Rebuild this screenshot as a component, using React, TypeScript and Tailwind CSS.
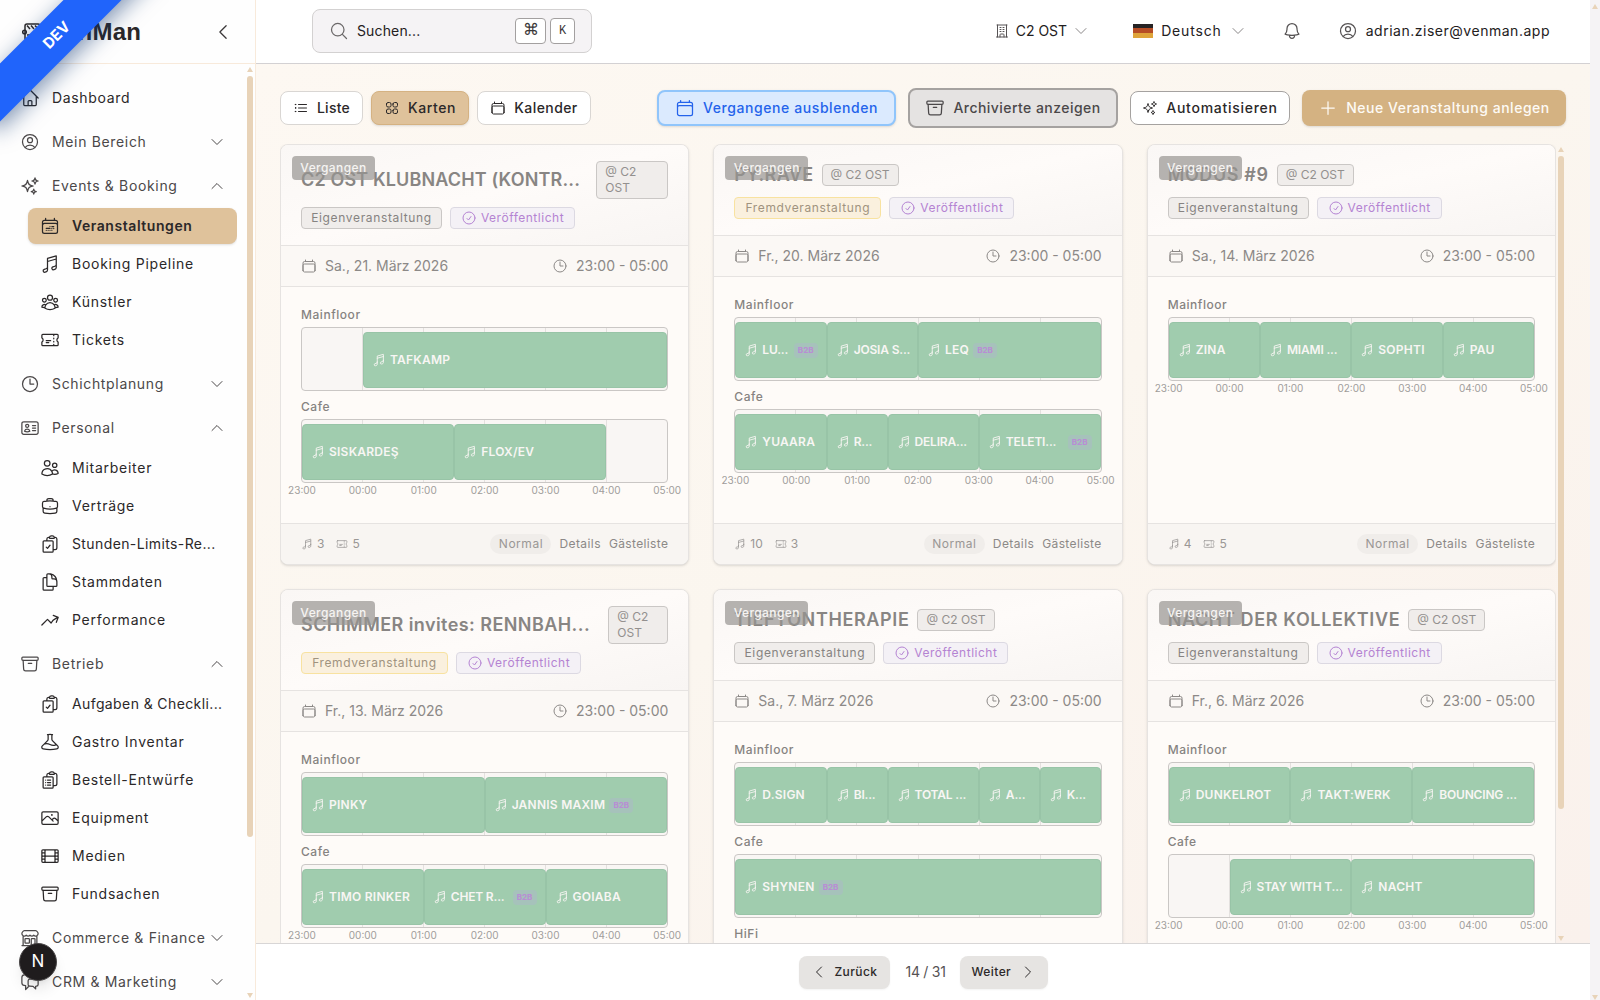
import type { ReactNode } from "react"
import type { IconType } from "react-icons"
import {
  HiOutlineArchiveBox,
  HiOutlineArrowTrendingUp,
  HiOutlineBeaker,
  HiOutlineBell,
  HiOutlineBriefcase,
  HiOutlineBuildingOffice,
  HiOutlineBuildingStorefront,
  HiOutlineCalendar,
  HiOutlineCalendarDateRange,
  HiOutlineChatBubbleLeftRight,
  HiOutlineCheckCircle,
  HiOutlineChevronDown,
  HiOutlineChevronLeft,
  HiOutlineChevronRight,
  HiOutlineChevronUp,
  HiOutlineClipboardDocumentCheck,
  HiOutlineClipboardDocumentList,
  HiOutlineClock,
  HiOutlineDocumentDuplicate,
  HiOutlineFilm,
  HiOutlineHome,
  HiOutlineIdentification,
  HiOutlineListBullet,
  HiOutlineMagnifyingGlass,
  HiOutlineMusicalNote,
  HiOutlinePhoto,
  HiOutlinePlus,
  HiOutlineSparkles,
  HiOutlineSquares2X2,
  HiOutlineTicket,
  HiOutlineUserCircle,
  HiOutlineUserGroup,
  HiOutlineUsers,
} from "react-icons/hi2"
import { clsx } from "clsx"

interface NavItem {
  label: string
  icon: IconType
  active?: boolean
}

interface NavSection {
  label: string
  icon: IconType
  open?: boolean
  plain?: boolean
  items?: NavItem[]
}

interface Slot {
  hours: number
  name?: string
  b2b?: boolean
  cut?: boolean
}

interface Floor {
  name: string
  slots: Slot[]
}

interface EventCard {
  title: string
  titleClass?: string
  venueClass?: string
  external?: boolean
  date: string
  floors: Floor[]
  artists: number
  tickets: number
}

const sections: NavSection[] = [
  { label: "Dashboard", icon: HiOutlineHome, plain: true },
  { label: "Mein Bereich", icon: HiOutlineUserCircle },
  {
    label: "Events & Booking",
    icon: HiOutlineSparkles,
    open: true,
    items: [
      { label: "Veranstaltungen", icon: HiOutlineCalendarDateRange, active: true },
      { label: "Booking Pipeline", icon: HiOutlineMusicalNote },
      { label: "Künstler", icon: HiOutlineUserGroup },
      { label: "Tickets", icon: HiOutlineTicket },
    ],
  },
  { label: "Schichtplanung", icon: HiOutlineClock },
  {
    label: "Personal",
    icon: HiOutlineIdentification,
    open: true,
    items: [
      { label: "Mitarbeiter", icon: HiOutlineUsers },
      { label: "Verträge", icon: HiOutlineBriefcase },
      { label: "Stunden-Limits-Re...", icon: HiOutlineClipboardDocumentCheck },
      { label: "Stammdaten", icon: HiOutlineDocumentDuplicate },
      { label: "Performance", icon: HiOutlineArrowTrendingUp },
    ],
  },
  {
    label: "Betrieb",
    icon: HiOutlineArchiveBox,
    open: true,
    items: [
      { label: "Aufgaben & Checkli...", icon: HiOutlineClipboardDocumentCheck },
      { label: "Gastro Inventar", icon: HiOutlineBeaker },
      { label: "Bestell-Entwürfe", icon: HiOutlineClipboardDocumentList },
      { label: "Equipment", icon: HiOutlinePhoto },
      { label: "Medien", icon: HiOutlineFilm },
      { label: "Fundsachen", icon: HiOutlineArchiveBox },
    ],
  },
  { label: "Commerce & Finance", icon: HiOutlineBuildingStorefront },
  { label: "CRM & Marketing", icon: HiOutlineChatBubbleLeftRight },
]

const events: EventCard[] = [
  {
    title: "C2 OST KLUBNACHT (KONTR...",
    titleClass: "tracking-[0.008em]",
    venueClass: "w-[72px]",
    date: "Sa., 21. März 2026",
    artists: 3,
    tickets: 5,
    floors: [
      { name: "Mainfloor", slots: [{ hours: 1 }, { hours: 5, name: "TAFKAMP" }] },
      {
        name: "Cafe",
        slots: [{ hours: 2.5, name: "SISKARDEŞ" }, { hours: 2.5, name: "FLOX/EV" }, { hours: 1 }],
      },
    ],
  },
  {
    title: "PY.RAVE",
    titleClass: "tracking-[0.02em]",
    external: true,
    date: "Fr., 20. März 2026",
    artists: 10,
    tickets: 3,
    floors: [
      {
        name: "Mainfloor",
        slots: [
          { hours: 1.5, name: "LU...", b2b: true, cut: true },
          { hours: 1.5, name: "JOSIA S...", cut: true },
          { hours: 3, name: "LEQ", b2b: true },
        ],
      },
      {
        name: "Cafe",
        slots: [
          { hours: 1.5, name: "YUAARA" },
          { hours: 1, name: "R...", cut: true },
          { hours: 1.5, name: "DELIRA...", cut: true },
          { hours: 2, name: "TELETI...", b2b: true, cut: true },
        ],
      },
    ],
  },
  {
    title: "MODUS #9",
    date: "Sa., 14. März 2026",
    artists: 4,
    tickets: 5,
    floors: [
      {
        name: "Mainfloor",
        slots: [
          { hours: 1.5, name: "ZINA" },
          { hours: 1.5, name: "MIAMI ...", cut: true },
          { hours: 1.5, name: "SOPHTI" },
          { hours: 1.5, name: "PAU" },
        ],
      },
    ],
  },
  {
    title: "SCHIMMER invites: RENNBAH...",
    titleClass: "tracking-[0.024em]",
    venueClass: "w-[60px]",
    external: true,
    date: "Fr., 13. März 2026",
    artists: 5,
    tickets: 4,
    floors: [
      {
        name: "Mainfloor",
        slots: [
          { hours: 3, name: "PINKY" },
          { hours: 3, name: "JANNIS MAXIM", b2b: true },
        ],
      },
      {
        name: "Cafe",
        slots: [
          { hours: 2, name: "TIMO RINKER" },
          { hours: 2, name: "CHET R...", b2b: true, cut: true },
          { hours: 2, name: "GOIABA" },
        ],
      },
    ],
  },
  {
    title: "TIEFTONTHERAPIE",
    date: "Sa., 7. März 2026",
    artists: 6,
    tickets: 3,
    floors: [
      {
        name: "Mainfloor",
        slots: [
          { hours: 1.5, name: "D.SIGN" },
          { hours: 1, name: "BI...", cut: true },
          { hours: 1.5, name: "TOTAL ...", cut: true },
          { hours: 1, name: "A...", cut: true },
          { hours: 1, name: "K...", cut: true },
        ],
      },
      { name: "Cafe", slots: [{ hours: 6, name: "SHYNEN", b2b: true }] },
      { name: "HiFi", slots: [{ hours: 6 }] },
    ],
  },
  {
    title: "NACHT DER KOLLEKTIVE",
    date: "Fr., 6. März 2026",
    artists: 5,
    tickets: 5,
    floors: [
      {
        name: "Mainfloor",
        slots: [
          { hours: 2, name: "DUNKELROT" },
          { hours: 2, name: "TAKT:WERK" },
          { hours: 2, name: "BOUNCING ...", cut: true },
        ],
      },
      {
        name: "Cafe",
        slots: [{ hours: 1 }, { hours: 2, name: "STAY WITH T...", cut: true }, { hours: 3, name: "NACHT" }],
      },
    ],
  },
]

const hours = ["23:00", "00:00", "01:00", "02:00", "03:00", "04:00", "05:00"]

function Scrollbar({ thumb }: { thumb: string }) {
  return (
    <div className="flex w-[6px] shrink-0 flex-col items-center">
      <svg width="6" height="5" viewBox="0 0 6 5" className="mb-1 shrink-0">
        <path d="M3 0 6 5H0Z" fill="#e8d3b8" />
      </svg>
      <div className={clsx("w-full rounded-full bg-[#e8d3b8]", thumb)} />
      <svg width="6" height="5" viewBox="0 0 6 5" className="mt-auto shrink-0">
        <path d="M3 5 0 0H6Z" fill="#e8d3b8" />
      </svg>
    </div>
  )
}

function Sidebar() {
  return (
    <aside className="flex w-64 shrink-0 flex-col border-r border-[#f8eadb] bg-[#fefefe]">
      <div className="flex h-16 shrink-0 items-center border-b border-[#f8eadb] pr-[22px] pl-[22px]">
        <svg width="20" height="20" viewBox="0 0 20 20" fill="none" stroke="#2b2829" strokeWidth="1.5">
          <rect x="3" y="2" width="15" height="16" rx="2" />
          <circle cx="2.5" cy="10" r="1.8" />
          <path d="M5 3.5 8 7M9 3.5l3 3.5M13 3.5l3 3.5M5 13h11" />
        </svg>
        <span className="ml-[7px] font-['Liberation_Sans'] text-2xl font-bold tracking-[0.01em] text-[#2b2829]">
          VenMan
        </span>
        <HiOutlineChevronLeft className="ml-auto size-5 text-[#3b3839]" />
      </div>
      <div className="flex min-h-0 flex-1">
        <nav className="flex w-[237px] flex-col gap-1 overflow-hidden pt-[14px] pl-2 text-sm">
          {sections.map((section) => (
            <div key={section.label} className="shrink-0">
              <div
                className={clsx(
                  "flex h-10 items-center px-3",
                  section.plain ? "text-[#2b2829]" : "text-[#4b4849]"
                )}
              >
                <section.icon className="size-5 shrink-0" />
                <span className="ml-3 whitespace-nowrap tracking-[0.047em]">{section.label}</span>
                {!section.plain &&
                  (section.open ? (
                    <HiOutlineChevronUp className="ml-auto size-4 shrink-0" />
                  ) : (
                    <HiOutlineChevronDown className="ml-auto size-4 shrink-0" />
                  ))}
              </div>
              {section.items && (
                <div className="ml-5 flex flex-col gap-0.5 py-0.5">
                  {section.items.map((item) => (
                    <div
                      key={item.label}
                      className={clsx(
                        "flex h-9 items-center rounded-lg px-3 text-[#2b2829]",
                        item.active && "bg-[#dfc29b] font-semibold shadow-sm"
                      )}
                    >
                      <item.icon className="size-5 shrink-0" />
                      <span
                        className={clsx(
                          "ml-3 whitespace-nowrap",
                          item.active && "tracking-[0.04em]",
                          !item.active && item.label.endsWith("...") && "tracking-[0.028em]",
                          !item.active && !item.label.endsWith("...") && "tracking-[0.053em]"
                        )}
                      >
                        {item.label}
                      </span>
                    </div>
                  ))}
                </div>
              )}
            </div>
          ))}
        </nav>
        <div className="ml-[10px] flex pt-[3px] pb-0.5">
          <Scrollbar thumb="h-[761px]" />
        </div>
      </div>
    </aside>
  )
}

function Kbd({ children, className }: { children: ReactNode; className: string }) {
  return (
    <kbd
      className={clsx(
        "flex h-[26px] items-center justify-center rounded border border-[#a3a0a0] bg-white font-['Liberation_Mono'] text-[#3b3839]",
        className
      )}
    >
      {children}
    </kbd>
  )
}

function TopBar() {
  return (
    <header className="flex h-16 shrink-0 items-center border-b border-[#d3d1d3] bg-white pr-10 pl-14 text-sm text-[#232021]">
      <div className="mb-0.5 flex h-11 w-[280px] items-center rounded-lg border border-[#d3d1d1] bg-[#f5f3f5] px-4">
        <HiOutlineMagnifyingGlass className="size-5 text-[#6b6869]" />
        <span className="ml-2 tracking-[0.01em]">Suchen...</span>
        <Kbd className="ml-auto w-[31px] text-base">⌘</Kbd>
        <Kbd className="ml-1 w-[25px] text-xs">K</Kbd>
      </div>
      <div className="mb-0.5 ml-auto flex items-center">
        <HiOutlineBuildingOffice className="size-4 text-[#565354]" />
        <span className="ml-1.5">C2 OST</span>
        <HiOutlineChevronDown className="ml-1.5 size-4 text-[#8a8788]" />
        <div className="ml-11 flex h-3.5 w-5 flex-col">
          <div className="flex-1 bg-[#262324]" />
          <div className="flex-1 bg-[#b64d25]" />
          <div className="flex-1 bg-[#dfa43a]" />
        </div>
        <span className="ml-2 tracking-[0.06em]">Deutsch</span>
        <HiOutlineChevronDown className="ml-2 size-4 text-[#8a8788]" />
        <HiOutlineBell className="ml-9 size-5 text-[#565354]" />
        <HiOutlineUserCircle className="ml-9 size-5 text-[#565354]" />
        <span className="ml-2 tracking-[0.037em]">adrian.ziser@venman.app</span>
      </div>
    </header>
  )
}

function Toolbar() {
  return (
    <div className="flex h-10 shrink-0 items-center pr-6 text-sm font-medium text-[#2b2829]">
      <button className="flex h-[34px] w-[83px] items-center justify-center gap-2 rounded-lg border border-[#d9d6d3] bg-white tracking-[0.02em]">
        <HiOutlineListBullet className="size-4" />
        Liste
      </button>
      <button className="ml-2 flex h-[34px] w-[98px] items-center justify-center gap-2 rounded-lg border border-[#d5b282] bg-[#dfc29b] tracking-[0.04em] shadow-sm">
        <HiOutlineSquares2X2 className="size-4" />
        Karten
      </button>
      <button className="ml-2 flex h-[34px] w-[114px] items-center justify-center gap-2 rounded-lg border border-[#d9d6d3] bg-white tracking-[0.03em]">
        <HiOutlineCalendar className="size-4" />
        Kalender
      </button>
      <button className="ml-auto flex h-9 w-[239px] items-center justify-center gap-2 rounded-lg border-2 border-[#90c5fb] bg-[#dbeafe] tracking-[0.042em] text-[#2463eb] shadow-sm">
        <HiOutlineCalendar className="size-5" />
        Vergangene ausblenden
      </button>
      <button className="ml-3 flex h-10 w-[210px] items-center justify-center gap-2 rounded-lg border-2 border-[#a5a2a0] bg-[#e5e3e2] tracking-[0.032em] text-[#4b4849]">
        <HiOutlineArchiveBox className="size-5" />
        Archivierte anzeigen
      </button>
      <button className="ml-3 flex h-[34px] w-40 items-center justify-center gap-2 rounded-lg border border-[#a5a2a0] bg-white tracking-[0.052em]">
        <HiOutlineSparkles className="size-4" />
        Automatisieren
      </button>
      <button className="ml-3 flex h-9 w-[264px] items-center justify-center gap-2 rounded-lg bg-[#d4b282] tracking-[0.038em] text-[#fdfaf5] shadow-sm">
        <HiOutlinePlus className="size-5" />
        Neue Veranstaltung anlegen
      </button>
    </div>
  )
}

function Timeline({ slots }: { slots: Slot[] }) {
  return (
    <div className="relative h-16 rounded border border-[#cac7c5] bg-[#f9f6f4]">
      <div className="absolute inset-0 flex">
        {hours.slice(1).map((h) => (
          <div key={h} className="flex-1 border-r border-[#e3e0de] last:border-r-0" />
        ))}
      </div>
      <div className="relative flex h-full pt-1 pb-0.5">
        {slots.map((slot, i) => (
          <div key={i} className="min-w-0" style={{ width: `${(slot.hours / 6) * 100}%` }}>
            {slot.name && (
              <div className="flex h-full items-center gap-1 overflow-hidden rounded border border-[#98c4a7] bg-[#a0ccae] px-2 text-xs font-semibold whitespace-nowrap text-[#f8f6f4]">
                <HiOutlineMusicalNote className="size-3.5 shrink-0" />
                <span className={slot.cut ? "tracking-[-0.015em]" : "tracking-[0.02em]"}>{slot.name}</span>
                {slot.b2b && (
                  <span
                    className={clsx(
                      "flex h-[15px] w-6 shrink-0 items-center justify-center rounded bg-[#a6c2bb] text-[8px] font-bold text-[#b98cd5]",
                      slot.cut && "ml-auto"
                    )}
                  >
                    B2B
                  </span>
                )}
              </div>
            )}
          </div>
        ))}
      </div>
    </div>
  )
}

function Card({ event }: { event: EventCard }) {
  return (
    <article className="relative flex h-[421px] flex-col overflow-hidden rounded-lg border border-[#e6e3e1] bg-[#fefbf8] text-[#8c8987] shadow-sm">
      <div className="border-b border-[#e6e3e1] bg-linear-to-br from-[#faf7f5] via-[#fefbf9] to-[#f8f5f3] px-5 py-4">
        <div className="flex items-center gap-2">
          <h3
            className={clsx(
              "text-lg font-semibold whitespace-nowrap text-[#888583]",
              event.titleClass ?? "tracking-[0.035em]"
            )}
          >
            {event.title}
          </h3>
          <span
            className={clsx(
              "rounded border border-[#cac7c5] bg-[#f0edeb] px-2 py-0.5 text-xs text-[#93908e]",
              event.venueClass ? "ml-auto shrink-0" : "whitespace-nowrap",
              event.venueClass
            )}
          >
            @ C2 OST
          </span>
        </div>
        <div className="mt-2 flex gap-2 text-xs">
          {event.external ? (
            <span className="flex h-[22px] w-[147px] items-center justify-center rounded-sm border border-[#f8e2a0] bg-[#faf0de] tracking-[0.052em] text-[#a0937f]">
              Fremdveranstaltung
            </span>
          ) : (
            <span className="flex h-[22px] w-[141px] items-center justify-center rounded-sm border border-[#cac7c5] bg-[#f0edeb] tracking-[0.055em] text-[#868381]">
              Eigenveranstaltung
            </span>
          )}
          <span className="flex h-[22px] w-[125px] items-center justify-center gap-1 rounded-sm border border-[#dcd9e2] bg-[#f4f1f6] tracking-[0.043em] text-[#b483d2]">
            <HiOutlineCheckCircle className="size-4" />
            Veröffentlicht
          </span>
        </div>
      </div>
      <div className="flex h-[41px] shrink-0 items-center gap-2 border-b border-[#e6e3e1] bg-[#fbf8f5] px-5 text-sm">
        <HiOutlineCalendar className="size-4" />
        <span>{event.date}</span>
        <HiOutlineClock className="ml-auto size-4" />
        <span>23:00 - 05:00</span>
      </div>
      <div className="flex min-h-0 flex-1 flex-col gap-2 overflow-hidden px-5 pt-5">
        {event.floors.map((floor) => (
          <div key={floor.name} className="shrink-0">
            <div className="mb-1 text-xs font-medium tracking-[0.045em] text-[#868381]">{floor.name}</div>
            <Timeline slots={floor.slots} />
          </div>
        ))}
        <div className="-mx-[29px] -mt-[7px] flex justify-between text-[10px] leading-3 text-[#a09d9b]">
          {hours.map((h) => (
            <span key={h} className="w-[60px] text-center">
              {h}
            </span>
          ))}
        </div>
      </div>
      <div className="flex h-[41px] shrink-0 items-center border-t border-[#e6e3e1] bg-[#f8f5f2] px-5 text-xs text-[#9a9795]">
        <HiOutlineMusicalNote className="size-3" />
        <span className="ml-1">{event.artists}</span>
        <HiOutlineTicket className="ml-3 size-3" />
        <span className="ml-1">{event.tickets}</span>
        <span className="ml-auto flex h-5 w-[61px] items-center justify-center rounded-full bg-[#f0edea] tracking-[0.045em]">
          Normal
        </span>
        <span className="ml-2 tracking-[0.035em] text-[#8c8987]">Details</span>
        <span className="ml-2 tracking-[0.03em] text-[#8c8987]">Gästeliste</span>
      </div>
      {/* Past marker lies over the title */}
      <div className="absolute top-[11px] left-[11px] flex h-6 w-[83px] items-center justify-center rounded bg-[#979491]/70 text-xs font-medium tracking-[0.035em] text-[#f6f4f2]">
        Vergangen
      </div>
    </article>
  )
}

function Pagination() {
  return (
    <footer className="flex h-[57px] shrink-0 items-center justify-center gap-4 border-t border-[#d8d6d6] bg-white text-[13px] font-medium text-[#2b2829]">
      <button className="flex h-[33px] w-[91px] items-center rounded-lg bg-[#e6e4e2] px-3 text-xs shadow-xs">
        <HiOutlineChevronLeft className="size-4" />
        <span className="ml-2 tracking-[0.035em]">Zurück</span>
      </button>
      <span className="w-[38px] text-center text-sm font-normal tracking-[-0.02em] whitespace-nowrap text-[#565354]">
        14 / 31
      </span>
      <button className="flex h-[33px] w-[88px] items-center rounded-lg bg-[#e6e4e2] px-3 text-xs shadow-xs">
        <span className="tracking-[0.035em]">Weiter</span>
        <HiOutlineChevronRight className="ml-auto size-4" />
      </button>
    </footer>
  )
}

export default function App() {
  return (
    <div className="relative flex h-screen w-full overflow-hidden bg-white font-[Inter,sans-serif]">
      <Sidebar />
      <div className="flex min-w-0 flex-1 flex-col">
        <TopBar />
        <main className="flex min-h-0 flex-1 flex-col gap-4 overflow-hidden bg-linear-to-br from-[#fdf8f2] via-[#fbf6ef] to-[#faf1ec] pt-6 pl-6">
          <Toolbar />
          <div className="flex min-h-0 flex-1">
            <div className="grid w-[1276px] grid-cols-3 content-start gap-6 overflow-hidden">
              {events.map((event) => (
                <Card key={event.title} event={event} />
              ))}
            </div>
            <div className="ml-0.5 flex pt-[3px] pb-0.5">
              <Scrollbar thumb="h-[653px]" />
            </div>
          </div>
        </main>
        <Pagination />
      </div>
      <div className="flex w-[10px] shrink-0 justify-center bg-[#f5f3f5] pt-1">
        <Scrollbar thumb="hidden" />
      </div>

      {/* Environment ribbon */}
      <div className="absolute top-[15px] left-[-53px] flex h-[41px] w-[220px] -rotate-45 items-center justify-center bg-[#2064fb] text-[15px] font-bold text-white shadow-[0_6px_22px_rgba(10,50,110,0.5)]">
        DEV
      </div>
      <div className="absolute bottom-[19px] left-[19px] flex size-[38px] items-center justify-center rounded-full border border-[#4a4748] bg-[#1f1c1d] text-[17px] text-white shadow-lg">
        N
      </div>
    </div>
  )
}
